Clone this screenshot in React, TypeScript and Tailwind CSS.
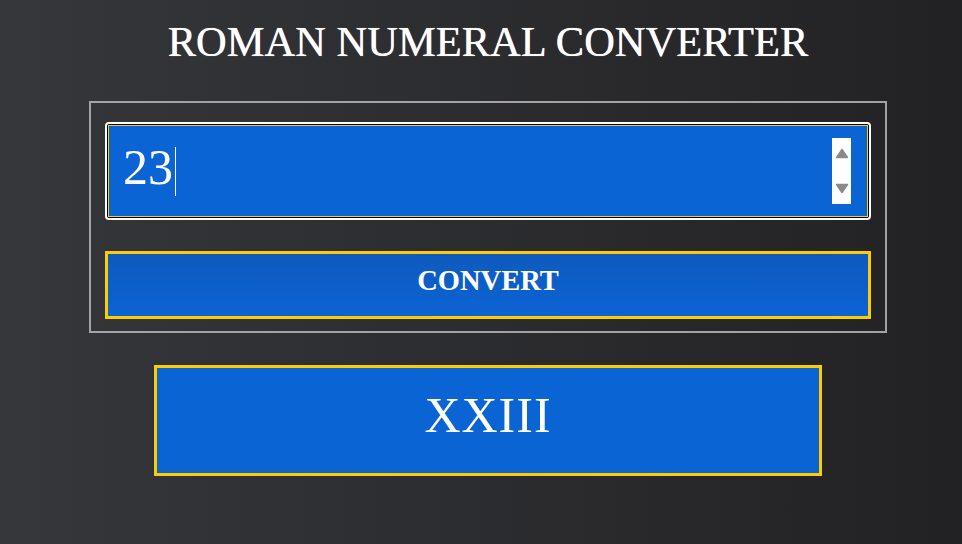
import React from "react";

const serif = { fontFamily: '"Liberation Serif", "Times New Roman", serif' };

function Spinner() {
  return (
    <div className="absolute right-[16px] top-1/2 -translate-y-1/2 flex h-[66px] w-[19px] flex-col items-center justify-between bg-white py-[10px]">
      <svg width="14" height="11" viewBox="0 0 14 11">
        <path d="M7 1.5 L12.5 9.5 H1.5 Z" fill="#8a8a8a" stroke="#8a8a8a" strokeWidth="1.5" strokeLinejoin="round" />
      </svg>
      <svg width="14" height="11" viewBox="0 0 14 11">
        <path d="M1.5 1.5 H12.5 L7 9.5 Z" fill="#8a8a8a" stroke="#8a8a8a" strokeWidth="1.5" strokeLinejoin="round" />
      </svg>
    </div>
  );
}

export default function App() {
  return (
    <div
      className="min-h-screen w-full bg-linear-to-r from-[#36373b] to-[#222224] pl-[14px] text-white"
      style={serif}
    >
      <div className="flex flex-col items-center">
        <h1 className="mt-[21px] text-[42.5px] leading-[42px] font-normal [text-shadow:0_0_0.7px_#fff]">
          ROMAN NUMERAL CONVERTER
        </h1>

        {/* Form */}
        <form
          className="mt-[38px] flex w-[798px] flex-col border-2 border-[#a3a3a3] px-[14px] pt-[19px] pb-[12px]"
          onSubmit={(e) => e.preventDefault()}
        >
          <div className="rounded-[4px] border-2 border-white bg-black p-px">
            <div className="relative flex h-[92px] items-center border border-[#fecc00] bg-[#0b64d4] pl-[14px]">
              <span className="mb-[9px] text-[50px] leading-none">23</span>
              <span className="ml-[2px] h-[49px] w-px bg-white" />
              <Spinner />
            </div>
          </div>

          <button
            type="submit"
            className="mt-[31px] flex h-[68px] w-full items-center justify-center border-[3px] border-[#fecc00] bg-linear-to-b from-[#0e5abd] to-[#0b64d4] pb-[7px] text-[28.5px] font-bold leading-none text-white"
          >
            CONVERT
          </button>
        </form>

        {/* Output */}
        <div className="mt-[32px] flex h-[111px] w-[668px] items-center justify-center border-[3px] border-[#fecc00] bg-[#0b64d4] pb-[12px] text-[50px] leading-none tracking-[1px]">
          XXIII
        </div>
      </div>
    </div>
  );
}
